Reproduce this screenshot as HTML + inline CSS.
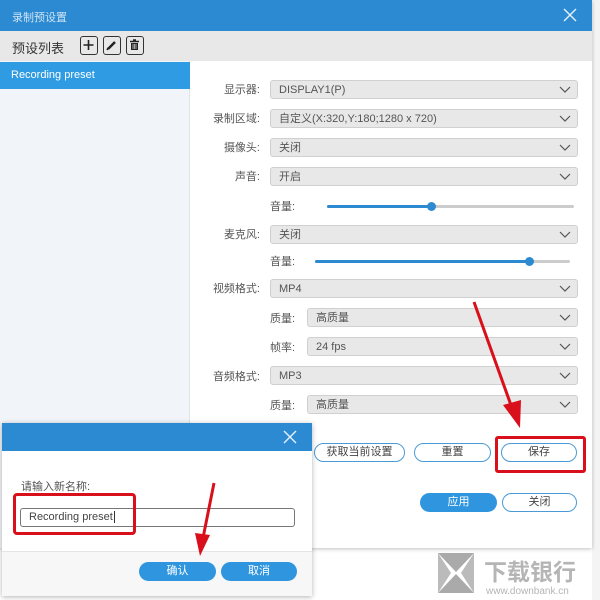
<!DOCTYPE html>
<html><head><meta charset="utf-8"><style>
*{margin:0;padding:0;box-sizing:border-box}
body{width:600px;height:600px;position:relative;overflow:hidden;background:#fff;font-family:"Liberation Sans","Noto Sans CJK SC",sans-serif;font-size:11px;color:#444}
.a{position:absolute}
.dd{position:absolute;height:19px;background:#e8e8e8;border:1px solid #d0d0d0;border-radius:3px;padding-left:8px;line-height:18px;color:#555;font-size:11px}
.dd svg{position:absolute;right:6px;top:5px}
.lb{position:absolute;text-align:right;font-size:11px;color:#555}
.btn{position:absolute;height:19px;border:1.5px solid #4a9ad8;border-radius:10px;background:#fff;text-align:center;line-height:16px;font-size:11px;color:#444}
.bb{position:absolute;height:19px;border-radius:10px;background:#2f95de;color:#fff;text-align:center;line-height:19px;font-size:11px}
</style></head><body>
<div class="a" style="left:592px;top:0;width:8px;height:600px;background:#f4f4f4"></div>
<div class="a" style="left:0;top:0;width:592px;height:548px;background:#fff;box-shadow:0 1px 4px rgba(0,0,0,.25)"></div>
<div class="a" style="left:0;top:0;width:592px;height:31px;background:#2b8ad2"></div>
<div class="a" style="left:12px;top:9px;color:#cfe4f5;font-size:11px">录制预设置</div>
<svg class="a" style="left:563px;top:8px" width="14" height="14"><path d="M1 1L13 13M13 1L1 13" stroke="#e8f2fb" stroke-width="1.4"/></svg>
<div class="a" style="left:0;top:31px;width:592px;height:30px;background:#e8e8e8"></div>
<div class="a" style="left:12px;top:38px;font-size:13px;color:#333">预设列表</div>
<div class="a" style="left:80px;top:36px;width:18px;height:19px;border:1.5px solid #333;border-radius:3px"><svg width="15" height="16"><path d="M7.5 3V13M2.5 8H12.5" stroke="#222" stroke-width="1.6"/></svg></div>
<div class="a" style="left:103px;top:36px;width:18px;height:19px;border:1.5px solid #333;border-radius:3px"><svg width="15" height="16"><path d="M4 12L11 5" stroke="#222" stroke-width="2.5"/><path d="M3 13L4 11" stroke="#222" stroke-width="1.5"/></svg></div>
<div class="a" style="left:126px;top:36px;width:18px;height:19px;border:1.5px solid #333;border-radius:3px"><svg width="15" height="16"><path d="M3 4.5H12M6 3H9" stroke="#222" stroke-width="1.4"/><rect x="4" y="6" width="7" height="7" fill="#222"/><path d="M6 7V12M7.5 7V12M9 7V12" stroke="#fff" stroke-width=".6"/></svg></div>
<div class="a" style="left:0;top:61px;width:190px;height:487px;background:#f1f5f9;border-right:1px solid #e0e4e8"></div>
<div class="a" style="left:0;top:62px;width:190px;height:27px;background:#2f9be2;color:#fff;font-size:11px;line-height:27px;padding-left:11px">Recording preset</div>

<div class="lb" style="left:200px;top:81px;width:60px">显示器:</div>
<div class="dd" style="left:270px;top:80px;width:308px">DISPLAY1(P)<svg width="12" height="8"><path d="M1 1L6 6L11 1" stroke="#555" stroke-width="1.2" fill="none"/></svg></div>
<div class="lb" style="left:200px;top:110px;width:60px">录制区域:</div>
<div class="dd" style="left:270px;top:109px;width:308px">自定义(X:320,Y:180;1280 x 720)<svg width="12" height="8"><path d="M1 1L6 6L11 1" stroke="#555" stroke-width="1.2" fill="none"/></svg></div>
<div class="lb" style="left:200px;top:139px;width:60px">摄像头:</div>
<div class="dd" style="left:270px;top:138px;width:308px">关闭<svg width="12" height="8"><path d="M1 1L6 6L11 1" stroke="#555" stroke-width="1.2" fill="none"/></svg></div>
<div class="lb" style="left:200px;top:168px;width:60px">声音:</div>
<div class="dd" style="left:270px;top:167px;width:308px">开启<svg width="12" height="8"><path d="M1 1L6 6L11 1" stroke="#555" stroke-width="1.2" fill="none"/></svg></div>
<div class="a" style="left:270px;top:198px;color:#555">音量:</div>
<div class="a" style="left:327px;top:205px;width:247px;height:3px;background:#ccc;border-radius:2px"></div>
<div class="a" style="left:327px;top:205px;width:104px;height:3px;background:#2e8ad0;border-radius:2px"></div>
<div class="a" style="left:427px;top:202px;width:9px;height:9px;background:#2e8ad0;border-radius:50%"></div>
<div class="lb" style="left:200px;top:226px;width:60px">麦克风:</div>
<div class="dd" style="left:270px;top:225px;width:308px">关闭<svg width="12" height="8"><path d="M1 1L6 6L11 1" stroke="#555" stroke-width="1.2" fill="none"/></svg></div>
<div class="a" style="left:270px;top:253px;color:#555">音量:</div>
<div class="a" style="left:315px;top:260px;width:255px;height:3px;background:#ccc;border-radius:2px"></div>
<div class="a" style="left:315px;top:260px;width:214px;height:3px;background:#2e8ad0;border-radius:2px"></div>
<div class="a" style="left:525px;top:257px;width:9px;height:9px;background:#2e8ad0;border-radius:50%"></div>
<div class="lb" style="left:200px;top:280px;width:60px">视频格式:</div>
<div class="dd" style="left:270px;top:279px;width:308px">MP4<svg width="12" height="8"><path d="M1 1L6 6L11 1" stroke="#555" stroke-width="1.2" fill="none"/></svg></div>
<div class="a" style="left:270px;top:310px;color:#555">质量:</div>
<div class="dd" style="left:307px;top:308px;width:271px">高质量<svg width="12" height="8"><path d="M1 1L6 6L11 1" stroke="#555" stroke-width="1.2" fill="none"/></svg></div>
<div class="a" style="left:270px;top:339px;color:#555">帧率:</div>
<div class="dd" style="left:307px;top:337px;width:271px">24 fps<svg width="12" height="8"><path d="M1 1L6 6L11 1" stroke="#555" stroke-width="1.2" fill="none"/></svg></div>
<div class="lb" style="left:200px;top:368px;width:60px">音频格式:</div>
<div class="dd" style="left:270px;top:366px;width:308px">MP3<svg width="12" height="8"><path d="M1 1L6 6L11 1" stroke="#555" stroke-width="1.2" fill="none"/></svg></div>
<div class="a" style="left:270px;top:397px;color:#555">质量:</div>
<div class="dd" style="left:307px;top:395px;width:271px">高质量<svg width="12" height="8"><path d="M1 1L6 6L11 1" stroke="#555" stroke-width="1.2" fill="none"/></svg></div>

<div class="btn" style="left:314px;top:443px;width:91px">获取当前设置</div>
<div class="btn" style="left:414px;top:443px;width:77px">重置</div>
<div class="btn" style="left:501px;top:443px;width:76px">保存</div>
<div class="a" style="left:495px;top:436px;width:91px;height:37px;border:3px solid #d9101c;border-radius:3px"></div>
<div class="bb" style="left:420px;top:493px;width:77px">应用</div>
<div class="btn" style="left:502px;top:493px;width:75px">关闭</div>

<div class="a" style="left:2px;top:423px;width:310px;height:173px;background:#fff;box-shadow:0 1px 5px rgba(0,0,0,.3)"></div>
<div class="a" style="left:2px;top:423px;width:310px;height:28px;background:#2b8ad2"></div>
<svg class="a" style="left:283px;top:430px" width="14" height="14"><path d="M1 1L13 13M13 1L1 13" stroke="#e8f2fb" stroke-width="1.4"/></svg>
<div class="a" style="left:21px;top:478px;color:#555">请输入新名称:</div>
<div class="a" style="left:20px;top:508px;width:275px;height:19px;border:1px solid #777;border-radius:3px;padding-left:8px;line-height:17px;color:#444">Recording preset<span style="border-left:1px solid #333;margin-left:1px"></span></div>
<div class="a" style="left:13px;top:493px;width:123px;height:42px;border:3px solid #d9101c;border-radius:4px"></div>
<div class="a" style="left:2px;top:551px;width:310px;height:45px;background:#f7f7f7;border-top:1px solid #e4e4e4"></div>
<div class="bb" style="left:139px;top:562px;width:77px">确认</div>
<div class="bb" style="left:221px;top:562px;width:76px">取消</div>

<svg class="a" style="left:0;top:0" width="600" height="600">
<path d="M474 302L512 408" stroke="#d9101c" stroke-width="3"/><path d="M503 405L520 428L521 400Z" fill="#d9101c"/>
<path d="M214 483L203 538" stroke="#d9101c" stroke-width="3"/><path d="M195 533L200 556L210 535Z" fill="#d9101c"/>
<g fill="#aaa"><path d="M438 553H474L456 572Z"/><path d="M438 593H474L456 574Z"/><path d="M438 553L451 573L438 593Z" fill="#bbb"/><path d="M474 553L461 573L474 593Z" fill="#bbb"/></g>
<text x="484" y="580" font-size="23" font-weight="bold" fill="#b5b5b5" font-family="Noto Sans CJK SC,sans-serif">下载银行</text>
<text x="486" y="594" font-size="10" fill="#b5b5b5" font-family="Liberation Sans,sans-serif">www.downbank.cn</text>
</svg>
</body></html>
